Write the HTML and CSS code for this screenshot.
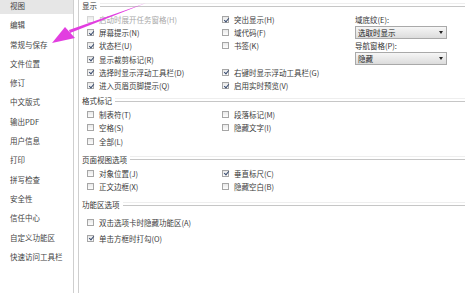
FILE: index.html
```html
<!DOCTYPE html>
<html lang="zh-CN">

<head>
    <meta charset="UTF-8">
    <title>选项</title>
    <link rel="stylesheet" href="styles.css">
</head>

<body>
    <div class="opts">
        <div class="opts__nav">
            <div class="nav__item nav__item--active">视图</div>
            <div class="nav__item">编辑</div>
            <div class="nav__item">常规与保存</div>
            <div class="nav__item">文件位置</div>
            <div class="nav__item">修订</div>
            <div class="nav__item">中文版式</div>
            <div class="nav__item">输出PDF</div>
            <div class="nav__item">用户信息</div>
            <div class="nav__item">打印</div>
            <div class="nav__item">拼写检查</div>
            <div class="nav__item">安全性</div>
            <div class="nav__item">信任中心</div>
            <div class="nav__item">自定义功能区</div>
            <div class="nav__item">快速访问工具栏</div>
        </div>
        <div class="opts__gutter"></div>
        <div class="opts__main">
            <div class="sec sec--first">
                <div class="sec__title"><span>显示</span><i class="sec__line"></i></div>
                <div class="sec__body">
                    <div class="col">
                        <label class="opt opt--faded"><b class="cb"></b>启动时展开任务窗格(H)</label>
                        <label class="opt"><b class="cb is-on"></b>屏幕提示(N)</label>
                        <label class="opt"><b class="cb is-on"></b>状态栏(U)</label>
                        <label class="opt"><b class="cb is-on"></b>显示裁剪标记(R)</label>
                        <label class="opt"><b class="cb is-on"></b>选择时显示浮动工具栏(D)</label>
                        <label class="opt"><b class="cb is-on"></b>进入页眉页脚提示(Q)</label>
                    </div>
                    <div class="col">
                        <label class="opt"><b class="cb is-on"></b>突出显示(H)</label>
                        <label class="opt"><b class="cb"></b>域代码(F)</label>
                        <label class="opt"><b class="cb"></b>书签(K)</label>
                        <div class="opt"></div>
                        <label class="opt"><b class="cb is-on"></b>右键时显示浮动工具栏(G)</label>
                        <label class="opt"><b class="cb is-on"></b>启用实时预览(V)</label>
                    </div>
                    <div class="col col--side">
                        <div class="field__label">域底纹(E):</div>
                        <div class="select"><span>选取时显示</span><i class="select__arrow"></i></div>
                        <div class="field__label">导航窗格(P):</div>
                        <div class="select"><span>隐藏</span><i class="select__arrow"></i></div>
                    </div>
                </div>
            </div>

            <div class="sec">
                <div class="sec__title"><span>格式标记</span><i class="sec__line"></i></div>
                <div class="sec__body">
                    <div class="col">
                        <label class="opt"><b class="cb"></b>制表符(T)</label>
                        <label class="opt"><b class="cb"></b>空格(S)</label>
                        <label class="opt"><b class="cb"></b>全部(L)</label>
                    </div>
                    <div class="col">
                        <label class="opt"><b class="cb"></b>段落标记(M)</label>
                        <label class="opt"><b class="cb"></b>隐藏文字(I)</label>
                    </div>
                </div>
            </div>

            <div class="sec sec--page">
                <div class="sec__title"><span>页面视图选项</span><i class="sec__line"></i></div>
                <div class="sec__body">
                    <div class="col">
                        <label class="opt"><b class="cb"></b>对象位置(J)</label>
                        <label class="opt"><b class="cb"></b>正文边框(X)</label>
                    </div>
                    <div class="col">
                        <label class="opt"><b class="cb is-on"></b>垂直标尺(C)</label>
                        <label class="opt"><b class="cb"></b>隐藏空白(B)</label>
                    </div>
                </div>
            </div>

            <div class="sec sec--ribbon">
                <div class="sec__title"><span>功能区选项</span><i class="sec__line"></i></div>
                <div class="sec__body">
                    <div class="col col--wide">
                        <label class="opt opt--tall"><b class="cb"></b>双击选项卡时隐藏功能区(A)</label>
                        <label class="opt opt--tall"><b class="cb is-on"></b>单击方框时打勾(O)</label>
                    </div>
                </div>
            </div>
        </div>

        <!-- annotation arrow -->
        <svg class="pointer" width="100" height="45" viewBox="0 0 100 45">
            <path d="M96 2 L20 32 L19 29 Z" fill="#e23ee0" />
            <path d="M2 42 L15 26 L25 37 Z" fill="#e23ee0" />
        </svg>
    </div>
</body>

</html>
```

FILE: styles.css
```css
* {
    box-sizing: border-box;
    margin: 0;
    padding: 0;
}

body {
    background: #fff;
    font-family: "Noto Sans CJK SC", "Noto Sans", sans-serif;
    font-size: 7.5px;
    color: #3a3a3a;
    overflow: hidden;
}

.opts {
    position: relative;
    display: flex;
    height: 293px;
}

.opts__nav {
    flex: none;
    width: 74px;
    border-right: 1px solid #cfcfcf;
}

.nav__item {
    height: 17px;
    margin-bottom: 2.3px;
    padding-left: 10px;
    line-height: 17px;
    white-space: nowrap;
    color: #444;
}

.nav__item--active {
    margin-top: -3px;
    background: #e6e6e6;
}

.opts__gutter {
    flex: none;
    width: 5px;
    border-right: 1px solid #cfcfcf;
}

.opts__main {
    flex: 1;
    min-width: 0;
    padding-left: 3px;
}

.sec {
    margin-top: 3px;
}

.sec--first {
    margin-top: 0;
}

.sec--page {
    margin-top: 6px;
}

.sec--ribbon {
    margin-top: 6px;
}

.sec__title {
    display: flex;
    align-items: center;
    height: 12px;
    line-height: 12px;
    color: #333;
}

.sec__line {
    flex: 1;
    height: 4px;
    margin-left: 3px;
    margin-top: -3px;
    border-top: 1px solid #eeeeee;
    border-bottom: 1px solid #c6c6c6;
}

.sec__body {
    display: flex;
    padding-left: 5px;
    padding-top: 1px;
}

.sec--ribbon .sec__body {
    padding-top: 3px;
}

.col {
    flex: none;
    width: 135px;
}

.col + .col {
    width: 133px;
}

.col.col--wide {
    width: 300px;
}

.opt {
    display: flex;
    align-items: center;
    height: 13.2px;
    white-space: nowrap;
}

.opt--tall {
    height: 16px;
}

.opt--faded {
    color: #a8a8a8;
}

.cb {
    position: relative;
    flex: none;
    width: 7px;
    height: 7px;
    margin-right: 5px;
    border: 1px solid #a6a6a6;
    background: linear-gradient(#e9e9e9, #fdfdfd);
}

.opt--faded .cb {
    border-color: #d6d6d6;
}

.cb.is-on::after {
    content: "";
    position: absolute;
    left: 1.5px;
    top: -0.5px;
    width: 2px;
    height: 4px;
    border-right: 1.2px solid #3b4d70;
    border-bottom: 1.2px solid #3b4d70;
    transform: rotate(40deg);
}

.col.col--side {
    width: 92px;
    padding-top: 1px;
}

.field__label {
    height: 12px;
    line-height: 12px;
    color: #333;
}

.select {
    display: flex;
    align-items: center;
    justify-content: space-between;
    height: 13px;
    margin-bottom: 1px;
    padding: 0 3px 0 2px;
    border: 1px solid #a9a9a9;
    background: linear-gradient(#f6f6f6, #dcdcdc);
    color: #222;
}

.select__arrow {
    width: 0;
    height: 0;
    border-left: 2px solid transparent;
    border-right: 2px solid transparent;
    border-top: 3px solid #222;
}

.pointer {
    position: absolute;
    left: 50px;
    top: 1px;
}
```
